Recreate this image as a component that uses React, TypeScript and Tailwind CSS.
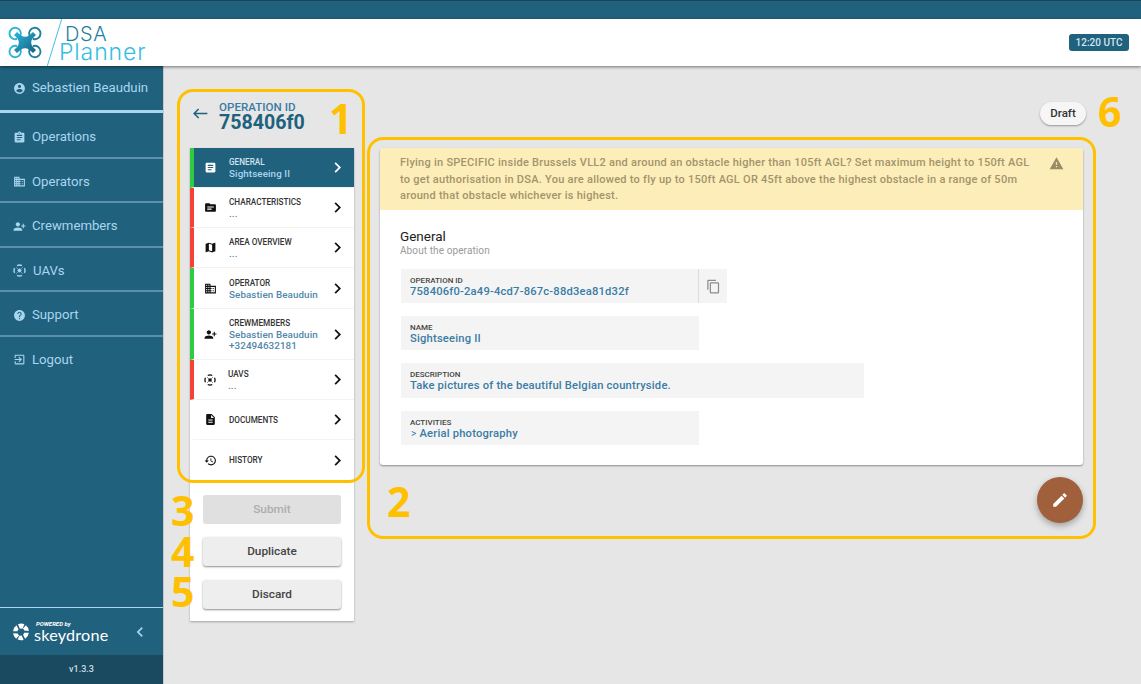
import React from 'react';

const ICONS: Record<string, string> = {
  account: 'M12 2C6.48 2 2 6.48 2 12s4.48 10 10 10 10-4.48 10-10S17.52 2 12 2zm0 3c1.66 0 3 1.34 3 3s-1.34 3-3 3-3-1.34-3-3 1.34-3 3-3zm0 14.2c-2.5 0-4.71-1.28-6-3.22.03-1.99 4-3.08 6-3.08 1.99 0 5.97 1.09 6 3.08-1.29 1.94-3.5 3.22-6 3.22z',
  assignment: 'M19 3h-4.18C14.4 1.84 13.3 1 12 1c-1.3 0-2.4.84-2.82 2H5c-1.1 0-2 .9-2 2v14c0 1.1.9 2 2 2h14c1.1 0 2-.9 2-2V5c0-1.1-.9-2-2-2zm-7 0c.55 0 1 .45 1 1s-.45 1-1 1-1-.45-1-1 .45-1 1-1zm2 14H7v-2h7v2zm3-4H7v-2h10v2zm0-4H7V7h10v2z',
  domain: 'M12 7V3H2v18h20V7H12zM6 19H4v-2h2v2zm0-4H4v-2h2v2zm0-4H4V9h2v2zm0-4H4V5h2v2zm4 12H8v-2h2v2zm0-4H8v-2h2v2zm0-4H8V9h2v2zm0-4H8V5h2v2zm10 12h-8v-2h2v-2h-2v-2h2v-2h-2V9h8v10zm-2-8h-2v2h2v-2zm0 4h-2v2h2v-2z',
  personAdd: 'M9 12c-2.21 0-4-1.79-4-4s1.79-4 4-4 4 1.79 4 4-1.79 4-4 4zm9-2V7h2v3h3v2h-3v3h-2v-3h-3v-2h3zM9 14c2.67 0 8 1.34 8 4v2H1v-2c0-2.66 5.33-4 8-4z',
  help: 'M12 2C6.48 2 2 6.48 2 12s4.48 10 10 10 10-4.48 10-10S17.52 2 12 2zm1 17h-2v-2h2v2zm2.07-7.75l-.9.92C13.45 12.9 13 13.5 13 15h-2v-.5c0-1.1.45-2.1 1.17-2.83l1.24-1.26c.37-.36.59-.86.59-1.41 0-1.1-.9-2-2-2s-2 .9-2 2H8c0-2.21 1.79-4 4-4s4 1.79 4 4c0 .88-.36 1.68-.93 2.25z',
  logout: 'M10.09 15.59L11.5 17l5-5-5-5-1.41 1.41L12.67 11H3v2h9.67l-2.58 2.59zM19 3H5c-1.11 0-2 .9-2 2v4h2V5h14v14H5v-4H3v4c0 1.1.89 2 2 2h14c1.1 0 2-.9 2-2V5c0-1.1-.9-2-2-2z',
  article: 'M19 3H5c-1.1 0-2 .9-2 2v14c0 1.1.9 2 2 2h14c1.1 0 2-.9 2-2V5c0-1.1-.9-2-2-2zm-5 14H7v-2h7v2zm3-4H7v-2h10v2zm0-4H7V7h10v2z',
  topic: 'M20 6h-8l-2-2H4c-1.1 0-1.99.9-1.99 2L2 18c0 1.1.9 2 2 2h16c1.1 0 2-.9 2-2V8c0-1.1-.9-2-2-2zm-6 10H6v-2h8v2zm4-4H6v-2h12v2z',
  map: 'M20.5 3l-.16.03L15 5.1 9 3 3.36 4.9c-.21.07-.36.25-.36.48V20.5c0 .28.22.5.5.5l.16-.03L9 18.9l6 2.1 5.64-1.9c.21-.07.36-.25.36-.48V3.5c0-.28-.22-.5-.5-.5zM15 19l-6-2.11V5l6 2.11V19z',
  description: 'M14 2H6c-1.1 0-1.99.9-1.99 2L4 20c0 1.1.89 2 1.99 2H18c1.1 0 2-.9 2-2V8l-6-6zm2 16H8v-2h8v2zm0-4H8v-2h8v2zm-3-5V3.5L18.5 9H13z',
  history: 'M13 3c-4.97 0-9 4.03-9 9H1l3.89 3.89.07.14L9 12H6c0-3.87 3.13-7 7-7s7 3.13 7 7-3.13 7-7 7c-1.93 0-3.68-.79-4.94-2.06l-1.42 1.42C8.27 19.99 10.51 21 13 21c4.97 0 9-4.03 9-9s-4.03-9-9-9zm-1 5v5l4.28 2.54.72-1.21-3.5-2.08V8H12z',
  copy: 'M16 1H4c-1.1 0-2 .9-2 2v14h2V3h12V1zm3 4H8c-1.1 0-2 .9-2 2v14c0 1.1.9 2 2 2h11c1.1 0 2-.9 2-2V7c0-1.1-.9-2-2-2zm0 16H8V7h11v14z',
  warning: 'M1 21h22L12 2 1 21zm12-3h-2v-2h2v2zm0-4h-2v-4h2v4z',
  edit: 'M3 17.25V21h3.75L17.81 9.94l-3.75-3.75L3 17.25zM20.71 7.04c.39-.39.39-1.02 0-1.41l-2.34-2.34c-.39-.39-1.02-.39-1.41 0l-1.83 1.83 3.75 3.75 1.83-1.83z',
  chevron: 'M10 6L8.59 7.41 13.17 12l-4.58 4.59L10 18l6-6z',
};

const Icon = ({ name, className }: { name: string; className: string }) => (
  <svg viewBox="0 0 24 24" fill="currentColor" className={className}>
    <path d={ICONS[name]} />
  </svg>
);

// round drone glyph: broken ring, thin X arms and a solid body
const DroneIcon = ({ className }: { className: string }) => (
  <svg viewBox="0 0 24 24" fill="none" stroke="currentColor" className={className}>
    <path d="M7.5 3a10 10 0 0 1 9 0M21 7.5a10 10 0 0 1 0 9M16.5 21a10 10 0 0 1-9 0M3 16.5a10 10 0 0 1 0-9" strokeWidth="2.6" />
    <path d="M6 6l12 12M18 6L6 18" strokeWidth="1" />
    <rect x="9" y="9" width="6" height="6" fill="currentColor" stroke="none" transform="rotate(45 12 12)" />
  </svg>
);

const Logo = () => (
  <svg viewBox="0 0 34 33" className="w-[34px] h-[33px] shrink-0" fill="none">
    <defs>
      <linearGradient id="logoBody" x1="0" y1="0" x2="1" y2="1">
        <stop offset="0" stopColor="#2bb6dc" />
        <stop offset="1" stopColor="#17607f" />
      </linearGradient>
    </defs>
    <g strokeWidth="1.9" strokeLinecap="round">
      <path d="M12.5 9.5A5.7 5.7 0 1 0 8.5 13" stroke="#29b5d8" />
      <path d="M21.5 9.5A5.7 5.7 0 1 1 25.5 13" stroke="#1f7f9f" />
      <path d="M12.5 23.5A5.7 5.7 0 1 1 8.5 20" stroke="#29b5d8" />
      <path d="M21.5 23.5A5.7 5.7 0 1 0 25.5 20" stroke="#1f7f9f" />
    </g>
    <path d="M9 6L13 9.5Q17 12 21 9.5L25 6L28 9L24.5 12.5Q22 16.5 24.5 20.5L28 24L25 27L21 23.5Q17 21 13 23.5L9 27L6 24L9.5 20.5Q12 16.5 9.5 12.5L6 9Z" fill="url(#logoBody)" />
  </svg>
);

const SkydroneMark = () => (
  <svg viewBox="0 0 24 24" className="w-[18px] h-[18px] shrink-0" fill="#fff">
    <path d="M8 1.5a11 11 0 0 1 8.5 0L14 7.5a5 5 0 0 0-3.5 0z" />
    <path d="M18.5 3a11 11 0 0 1 4 7.5l-6.2-.5a5 5 0 0 0-1.7-2.7z" />
    <path d="M22.5 13a11 11 0 0 1-5 8l-2.8-5.5a5 5 0 0 0 1.6-2.5z" />
    <path d="M15.5 22.5a11 11 0 0 1-8-.5l2.5-5.5a5 5 0 0 0 3 .2z" />
    <path d="M5.5 21a11 11 0 0 1-4-7.5l6.2.5a5 5 0 0 0 1.7 2.7z" />
    <path d="M1.5 11a11 11 0 0 1 4.5-8l2.8 5.5A5 5 0 0 0 7.2 11z" />
  </svg>
);

const NAV = [
  { label: 'Operations', icon: 'assignment' },
  { label: 'Operators', icon: 'domain' },
  { label: 'Crewmembers', icon: 'personAdd' },
  { label: 'UAVs', icon: 'drone' },
  { label: 'Support', icon: 'help' },
  { label: 'Logout', icon: 'logout' },
];

const STEPS = [
  { title: 'GENERAL', lines: ['Sightseeing II'], icon: 'article', bar: 'border-l-[#2ecc40]', h: 'h-10', active: true },
  { title: 'CHARACTERISTICS', lines: ['...'], icon: 'topic', bar: 'border-l-[#f44336]', h: 'h-10' },
  { title: 'AREA OVERVIEW', lines: ['...'], icon: 'map', bar: 'border-l-[#f44336]', h: 'h-10' },
  { title: 'OPERATOR', lines: ['Sebastien Beauduin'], icon: 'domain', bar: 'border-l-[#2ecc40]', h: 'h-[41px]' },
  { title: 'CREWMEMBERS', lines: ['Sebastien Beauduin', '+32494632181'], icon: 'personAdd', bar: 'border-l-[#2ecc40]', h: 'h-[51px]' },
  { title: 'UAVS', lines: ['...'], icon: 'drone', bar: 'border-l-[#f44336]', h: 'h-10' },
  { title: 'DOCUMENTS', lines: [], icon: 'description', bar: 'border-l-white', h: 'h-10' },
  { title: 'HISTORY', lines: [], icon: 'history', bar: 'border-l-white', h: 'h-[41px]' },
];

const Field = ({ label, value, className }: { label: string; value: React.ReactNode; className: string }) => (
  <div className={`bg-[#f4f4f4] pl-[9px] pt-[7px] h-[34px] ${className}`}>
    <div className="text-[8px] leading-[9px] font-medium text-[#444] uppercase">{label}</div>
    <div className="text-[11.2px] leading-[13px] font-medium text-[#3a7ca5] tracking-[0.2px]">{value}</div>
  </div>
);

const AnnotationNumber = ({ value, className }: { value: string; className: string }) => (
  <span className={`absolute font-['Open_Sans',sans-serif] font-bold text-[41px] leading-[36px] text-[#ffc000] ${className}`}>{value}</span>
);

export default function App() {
  return (
    <div className="relative w-full h-[684px] overflow-hidden flex flex-col bg-[#e6e6e6] font-['Roboto',sans-serif]">
      <div className="h-[19px] bg-[#20617e] border-t border-t-[#17465b]" />
      <header className="relative z-10 h-[47px] bg-white shadow-[0_1px_3px_rgba(0,0,0,0.5)] flex items-center justify-between pl-[8px] pr-[12px]">
        <div className="flex items-center h-full">
          <Logo />
          <div className="w-px h-[49px] bg-[#4cc0e4] rotate-[17deg] ml-[12px]" />
          <div className="ml-[4px] font-['Inter',sans-serif] font-light">
            <div className="text-[#1f7f9f] text-[20px] leading-[18px] pl-[6px] tracking-[0.6px]">DSA</div>
            <div className="text-[#35bde2] text-[23px] leading-[18px] tracking-[0.9px]">Planner</div>
          </div>
        </div>
        <div className="bg-[#20617e] rounded-[3px] text-[#d4e6ef] text-[10px] font-medium h-[17px] w-[60px] flex items-center justify-center -mt-[1px]">12:20 UTC</div>
      </header>

      <div className="flex flex-1 min-h-0">
        <aside className="w-[164px] shrink-0 bg-[#20617e] border-r border-r-[#c8c8c8] flex flex-col text-[#a9d6ef] text-[13.2px]">
          <div className="h-[44px] flex items-center pl-[13px] gap-[6px]">
            <Icon name="account" className="w-[13px] h-[13px]" />
            <span>Sebastien Beauduin</span>
          </div>
          <div className="h-[3px] mb-[1px] bg-[#a9d6ef]" />
          {NAV.map((item, i) => (
            <div key={item.label} className={`h-[44.5px] flex items-center pl-[13px] gap-[6px] ${i < NAV.length - 1 ? 'pt-[4px] border-b-2 border-b-[#5a90aa]' : 'pt-[2px]'}`}>
              {item.icon === 'drone' ? <DroneIcon className="w-[13px] h-[13px] mr-[1px]" /> : <Icon name={item.icon} className="w-[13px] h-[13px]" />}
              <span>{item.label}</span>
            </div>
          ))}
          <div className="flex-1" />
          <div className="h-[48px] border-t border-t-[#a9d6ef] flex items-center pl-[12px] pr-[13px] justify-between">
            <div className="flex items-center gap-[4px]">
              <SkydroneMark />
              <div className="text-white">
                <div className="text-[6px] leading-[6px] italic font-bold pl-[2px]">POWERED by</div>
                <div className="font-['Lato',sans-serif] text-[16.2px] leading-[16px] tracking-[0.2px]">skeydrone</div>
              </div>
            </div>
            <Icon name="chevron" className="w-[20px] h-[20px] rotate-180 text-[#a9d6ef]" />
          </div>
          <div className="h-[29px] bg-[#1a4a60] flex items-center justify-center text-[9px] font-medium text-[#c9dbe4]">v1.3.3</div>
        </aside>

        <main className="flex-1 min-w-0 flex pl-[26px] pt-[23px]">
          <div className="w-[164px] shrink-0">
            <div className="h-[59px] flex items-start pl-[3px] pt-[13px] text-[#20617e]">
              <svg viewBox="0 0 16 12" className="w-[15px] h-[11px] mt-[6px]" fill="none" stroke="currentColor" strokeWidth="1.6">
                <path d="M15.5 6H1M6 1L1 6l5 5" />
              </svg>
              <div className="ml-[11px]">
                <div className="text-[11.6px] leading-[11px] font-medium text-[#3a7ca5]">OPERATION ID</div>
                <div className="text-[19.6px] leading-[19px] font-bold">758406f0</div>
              </div>
            </div>
            <div className="bg-white shadow-[0_1px_2px_rgba(0,0,0,0.3)] h-[473px]">
              {STEPS.map(step => (
                <div key={step.title} className={`${step.h} border-l-4 ${step.bar} flex items-center pr-[6px] border-b border-b-[#f3f3f3] ${step.active ? 'bg-[#20617e] text-white' : 'text-[#111]'}`}>
                  {step.icon === 'drone'
                    ? <DroneIcon className="w-[12px] h-[12px] ml-[10px] shrink-0" />
                    : <Icon name={step.icon} className="w-[13px] h-[13px] ml-[10px] shrink-0" />}
                  <div className={`ml-[12px] flex-1 min-w-0 ${step.active ? '' : 'pt-px'}`}>
                    <div className={`text-[8.2px] leading-[11px] font-medium ${step.active ? 'text-[#cfe3ee]' : 'text-[#333]'}`}>{step.title}</div>
                    {step.lines.map(line => (
                      <div key={line} className={`text-[9.8px] leading-[11px] font-medium tracking-[0.1px] ${step.active ? 'text-[#a9d6ef]' : 'text-[#4f87ab]'}`}>{line}</div>
                    ))}
                  </div>
                  <Icon name="chevron" className="w-[21px] h-[21px] shrink-0" />
                </div>
              ))}
              <div className="px-[13px] pt-[14px] flex flex-col">
                <div className="h-[29px] rounded-[3px] bg-[#e0e0e0] flex items-center justify-center text-[11.8px] font-medium text-[#adadad]">Submit</div>
                <div className="h-[29px] mt-[13px] rounded-[3px] bg-[#eeeeee] shadow-[0_1px_2px_rgba(0,0,0,0.45)] flex items-center justify-center text-[11.8px] font-medium text-[#444]">Duplicate</div>
                <div className="h-[29px] mt-[14px] rounded-[3px] bg-[#eeeeee] shadow-[0_1px_2px_rgba(0,0,0,0.45)] flex items-center justify-center text-[11.8px] font-medium text-[#444]">Discard</div>
              </div>
            </div>
          </div>

          <div className="flex-1 min-w-0 pl-[26px] pr-[58px] flex flex-col">
            <div className="h-[59px] flex justify-end items-start pt-[13px] -mr-[3px]">
              <div className="h-[23px] w-[46px] rounded-full bg-[#f6f6f6] shadow-[0_1px_2px_rgba(0,0,0,0.35)] flex items-center justify-center text-[11.5px] font-medium text-[#333]">Draft</div>
            </div>
            <section className="bg-white rounded-[3px] shadow-[0_1px_2px_rgba(0,0,0,0.4)] h-[317px] overflow-hidden">
              <div className="h-[62px] bg-[#fdedb9] flex justify-between pl-[20px] pr-[19px] pt-[7px] text-[11px] leading-[16.5px] font-medium text-[#a3946c] tracking-[0.26px]">
                <p className="w-[636px]">Flying in SPECIFIC inside Brussels VLL2 and around an obstacle higher than 105ft AGL? Set maximum height to 150ft AGL to get authorisation in DSA. You are allowed to fly up to 150ft AGL OR 45ft above the highest obstacle in a range of 50m around that obstacle whichever is highest.</p>
                <Icon name="warning" className="w-[15px] h-[15px] mt-[1px] text-[#9a8c66]" />
              </div>
              <div className="pl-[20px] pt-[19px]">
                <div className="text-[13.5px] leading-[15px] text-[#222]">General</div>
                <div className="text-[10px] leading-[13px] text-[#9a9a9a] tracking-[0.1px]">About the operation</div>
                <div className="flex w-[326px] mt-[12px] ml-px">
                  <Field label="Operation ID" value="758406f0-2a49-4cd7-867c-88d3ea81d32f" className="flex-1" />
                  <div className="w-[29px] h-[34px] bg-[#f4f4f4] border-l border-l-[#dddddd] flex items-center justify-center">
                    <Icon name="copy" className="w-[15px] h-[15px] text-[#8c8c8c]" />
                  </div>
                </div>
                <Field label="Name" value="Sightseeing II" className="w-[298px] mt-[13px] ml-px" />
                <Field label="Description" value="Take pictures of the beautiful Belgian countryside." className="w-[463px] mt-[13px] ml-px h-[35px]" />
                <Field label="Activities" value={<><span className="font-normal text-[10px] ml-px mr-[3px]">&gt;</span>Aerial photography</>} className="w-[298px] mt-[13px] ml-px" />
              </div>
            </section>
            <div className="flex justify-end pt-[12px]">
              <div className="w-[46px] h-[46px] rounded-full bg-[#a0603c] shadow-[0_3px_6px_rgba(0,0,0,0.3)] flex items-center justify-center text-white">
                <Icon name="edit" className="w-[18px] h-[18px]" />
              </div>
            </div>
          </div>
        </main>
      </div>

      {/* yellow annotations drawn over the screenshot */}
      <div className="absolute left-[177px] top-[89px] w-[188px] h-[394px] border-[3.5px] border-[#ffc000] rounded-[16px] pointer-events-none" />
      <div className="absolute left-[367px] top-[137px] w-[729px] h-[402px] border-[3.5px] border-[#ffc000] rounded-[16px] pointer-events-none" />
      <AnnotationNumber value="1" className="left-[329px] top-[100px]" />
      <AnnotationNumber value="2" className="left-[387px] top-[483px]" />
      <AnnotationNumber value="3" className="left-[171px] top-[492px]" />
      <AnnotationNumber value="4" className="left-[171px] top-[533px]" />
      <AnnotationNumber value="5" className="left-[171px] top-[573px]" />
      <AnnotationNumber value="6" className="left-[1098px] top-[93px]" />
    </div>
  );
}
